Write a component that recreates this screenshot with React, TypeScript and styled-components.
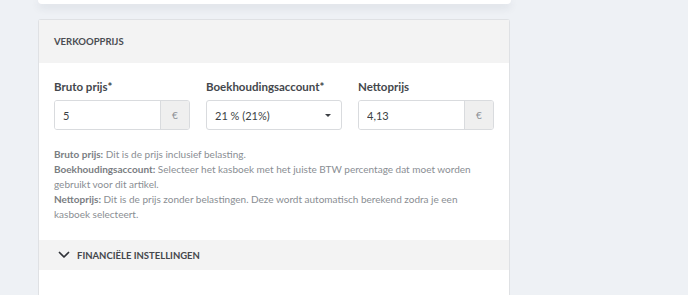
import React from 'react'
import styled, { createGlobalStyle } from 'styled-components'

const GlobalStyle = createGlobalStyle`
  html, body {
    margin: 0;
    padding: 0;
    background: #eef1f5;
    font-family: 'Lato', 'Open Sans', sans-serif;
    color: #3c3f44;
    overflow: hidden;
  }
`

const Page = styled.div`
  width: 688px;
  height: 295px;
  padding-left: 38px;
  box-sizing: border-box;
  display: flex;
  flex-direction: column;
  overflow: hidden;
`

const PrevCard = styled.div`
  width: 473px;
  height: 4px;
  flex-shrink: 0;
  background: #ffffff;
  box-shadow: 0 3px 8px rgba(40, 50, 70, 0.14);
  border-radius: 0 0 4px 4px;
`

// card runs on below the frame, so no bottom border
const Card = styled.div`
  width: 472px;
  margin-top: 15px;
  background: #ffffff;
  border: 1px solid #dfe1e4;
  border-bottom: none;
  border-radius: 3px 3px 0 0;
  box-sizing: border-box;
`

const CardHeader = styled.div`
  height: 43px;
  padding: 0 15px;
  display: flex;
  align-items: center;
  background: #f3f3f3;
  font-size: 9.5px;
  font-weight: 700;
  color: #4a4d52;
  text-transform: uppercase;
`

const CardBody = styled.div`
  padding: 16px 16px 18px 15px;
`

const FieldRow = styled.div`
  display: grid;
  grid-template-columns: repeat(3, 136px);
  column-gap: 16px;
`

const Field = styled.div`
  display: flex;
  flex-direction: column;
`

const Label = styled.label`
  font-size: 11.5px;
  font-weight: 700;
  color: #44474c;
  line-height: 16px;
  margin-bottom: 5px;
`

const InputGroup = styled.div`
  display: flex;
  height: 30px;
  border: 1px solid #d9dbde;
  border-radius: 3px;
  box-sizing: border-box;
  overflow: hidden;
`

const TextInput = styled.input`
  flex: 1;
  min-width: 0;
  border: none;
  outline: none;
  padding: 0 8px;
  font-family: inherit;
  font-size: 11px;
  color: #3c3f44;
  background: #ffffff;
`

const Addon = styled.span`
  width: 28px;
  display: flex;
  align-items: center;
  justify-content: center;
  background: #efefef;
  border-left: 1px solid #d9dbde;
  font-size: 10px;
  color: #8e9297;
`

const SelectBox = styled.div`
  height: 30px;
  padding: 0 10px 0 8px;
  display: flex;
  align-items: center;
  justify-content: space-between;
  border: 1px solid #d9dbde;
  border-radius: 3px;
  box-sizing: border-box;
  font-size: 11px;
  color: #3c3f44;
`

const Caret = styled.span`
  width: 0;
  height: 0;
  border-left: 3px solid transparent;
  border-right: 3px solid transparent;
  border-top: 3px solid #3c3f44;
`

const Help = styled.p`
  margin: 17px 0 0;
  font-size: 10px;
  line-height: 15px;
  color: #8a8e93;

  & b {
    font-weight: 700;
    color: #7a7d82;
  }
`

const Collapse = styled.div`
  height: 30px;
  padding-left: 19px;
  display: flex;
  align-items: center;
  gap: 7px;
  background: #f3f3f3;
  font-size: 9.5px;
  font-weight: 700;
  color: #44474c;
  text-transform: uppercase;
`

const Spacer = styled.div`
  height: 25px;
`

function Chevron() {
  return (
    <svg width="12" height="8" viewBox="0 0 12 8">
      <path d="M1.5 1.5 L6 6 L10.5 1.5" fill="none" stroke="#2f3237" strokeWidth="1.7" strokeLinecap="round" strokeLinejoin="round" />
    </svg>
  )
}

export default function App() {
  return (
    <Page>
      <GlobalStyle />
      <PrevCard />
      <Card>
        <CardHeader>Verkoopprijs</CardHeader>
        <CardBody>
          <FieldRow>
            <Field>
              <Label>Bruto prijs*</Label>
              <InputGroup>
                <TextInput defaultValue="5" />
                <Addon>€</Addon>
              </InputGroup>
            </Field>
            <Field>
              <Label>Boekhoudingsaccount*</Label>
              <SelectBox>
                <span>21 % (21%)</span>
                <Caret />
              </SelectBox>
            </Field>
            <Field>
              <Label>Nettoprijs</Label>
              <InputGroup>
                <TextInput defaultValue="4,13" />
                <Addon>€</Addon>
              </InputGroup>
            </Field>
          </FieldRow>
          <Help>
            <b>Bruto prijs:</b> Dit is de prijs inclusief belasting.
            <br />
            <b>Boekhoudingsaccount:</b> Selecteer het kasboek met het juiste BTW percentage dat moet worden
            <br />
            gebruikt voor dit artikel.
            <br />
            <b>Nettoprijs:</b> Dit is de prijs zonder belastingen. Deze wordt automatisch berekend zodra je een
            <br />
            kasboek selecteert.
          </Help>
        </CardBody>
        <Collapse>
          <Chevron />
          Financiële instellingen
        </Collapse>
        <Spacer />
      </Card>
    </Page>
  )
}
